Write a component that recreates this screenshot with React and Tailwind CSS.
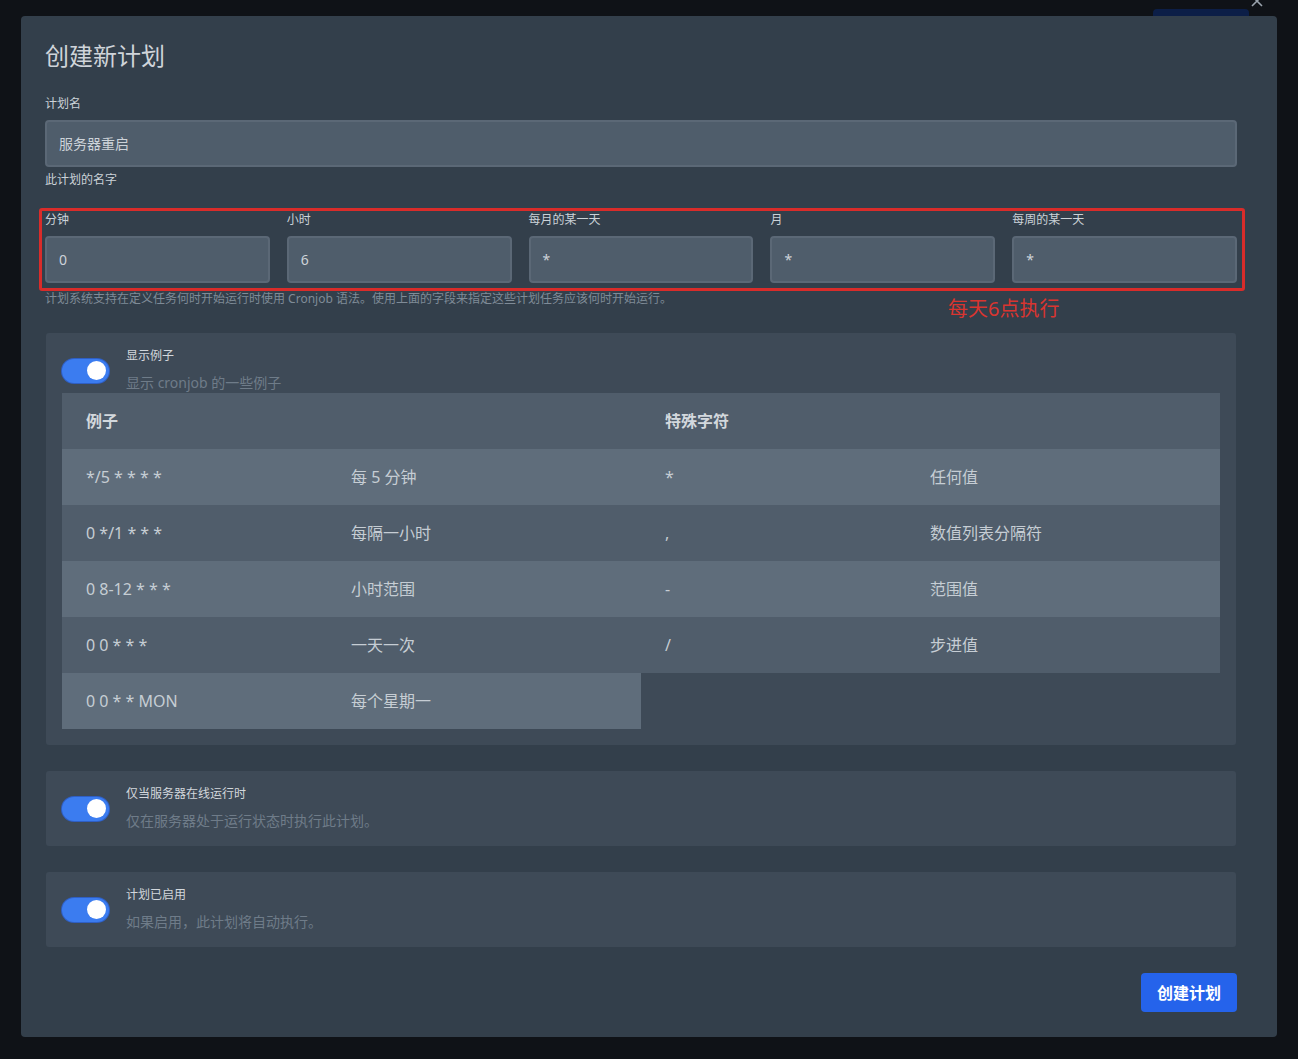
import React from "react";

const font = { fontFamily: '"Noto Sans", "Noto Sans CJK SC", sans-serif' };

const cronFields = [
  { label: "分钟", value: "0" },
  { label: "小时", value: "6" },
  { label: "每月的某一天", value: "*" },
  { label: "月", value: "*" },
  { label: "每周的某一天", value: "*" },
];

const examples = [
  ["*/5 * * * *", "每 5 分钟"],
  ["0 */1 * * *", "每隔一小时"],
  ["0 8-12 * * *", "小时范围"],
  ["0 0 * * *", "一天一次"],
  ["0 0 * * MON", "每个星期一"],
];

const specials = [
  ["*", "任何值"],
  [",", "数值列表分隔符"],
  ["-", "范围值"],
  ["/", "步进值"],
];

function Toggle() {
  return (
    <div className="w-[47px] h-[24px] shrink-0 rounded-full bg-[#3b7cf0] ring-1 ring-[#2f5fc4] flex items-center justify-end pr-[3px]">
      <div className="w-[19px] h-[19px] rounded-full bg-white" />
    </div>
  );
}

function ExampleTable({ title, rows }) {
  return (
    <div className="w-[579px] self-start">
      <div className="h-[56px] bg-[#505d6b] flex items-center px-6 text-[16px] font-bold text-[#d3d8dd]">
        {title}
      </div>
      {rows.map((r, i) => (
        <div
          key={i}
          className={`h-[56px] flex items-center text-[16px] text-[#c6cdd4] ${
            i % 2 === 0 ? "bg-[#5f6d7b]" : "bg-[#505d6b]"
          }`}
        >
          <div className="w-[265px] pl-6">{r[0]}</div>
          <div className="pl-6">{r[1]}</div>
        </div>
      ))}
    </div>
  );
}

function SwitchCard({ title, desc }) {
  return (
    <div className="mt-[26px] bg-[#3e4a57] rounded-[3px] px-4 py-[15px] flex items-center gap-[17px]">
      <Toggle />
      <div>
        <div className="text-[12px] leading-[16px] text-[#d2d7dc]">{title}</div>
        <div className="text-[14px] leading-[20px] mt-[9px] text-[#6f7c89]">{desc}</div>
      </div>
    </div>
  );
}

export default function App() {
  return (
    <div className="min-h-screen bg-[#0f1217] relative pt-[16px] pl-[21px] pb-[21px]" style={font}>
      {/* things behind the dialog */}
      <div className="absolute left-[1153px] top-[9px] w-[96px] h-[20px] rounded-[4px] bg-[#0c1e47]" />
      <svg className="absolute left-[1250px] top-[-6px]" width="14" height="14" viewBox="0 0 14 14">
        <path d="M2 2 L12 12 M12 2 L2 12" stroke="#9aa3ad" strokeWidth="1.6" />
      </svg>

      <div className="relative w-[1256px] bg-[#333f4b] rounded-[4px] pl-6 pr-[40px] pt-6 pb-[25px]">
        <h1 className="text-[24px] leading-[32px] text-[#cfd4da]">创建新计划</h1>

        <div className="mt-[24px] text-[12px] leading-[16px] text-[#cbd2d8]">计划名</div>
        <div className="mt-[8px] h-[47px] bg-[#4f5d6b] border-2 border-[#5b6876] rounded-[4px] flex items-center px-3 text-[14px] text-[#cdd3d9]">
          服务器重启
        </div>
        <div className="mt-[5px] text-[12px] leading-[16px] text-[#cbd2d8]">此计划的名字</div>

        <div className="relative mt-[24px]">
          <div className="grid grid-cols-5 gap-[17px]">
            {cronFields.map((f) => (
              <div key={f.label}>
                <div className="text-[12px] leading-[16px] text-[#cbd2d8]">{f.label}</div>
                <div className="mt-[8px] h-[47px] bg-[#4f5d6b] border-2 border-[#5b6876] rounded-[4px] flex items-center px-3 text-[14px] text-[#cdd3d9]">
                  {f.value}
                </div>
              </div>
            ))}
          </div>
          <div className="mt-[8px] text-[12px] leading-[16px] text-[#7f8b97]">
            计划系统支持在定义任务何时开始运行时使用 Cronjob 语法。使用上面的字段来指定这些计划任务应该何时开始运行。
          </div>
          <div className="absolute left-[-6px] top-[-4px] w-[1206px] h-[83px] border-[3px] border-[#d92c2a] rounded-[3px]" />
          <div className="absolute left-[903px] top-[83px] text-[20px] leading-[28px] text-[#d93530]">每天6点执行</div>
        </div>

        <div className="mt-[26px] ml-px w-[1190px] bg-[#3e4a57] rounded-[3px] px-4 pt-[15px] pb-4">
          <div className="flex items-center gap-[17px]">
            <Toggle />
            <div>
              <div className="text-[12px] leading-[16px] text-[#d2d7dc]">显示例子</div>
              <div className="text-[14px] leading-[20px] mt-[9px] text-[#6f7c89]">显示 cronjob 的一些例子</div>
            </div>
          </div>
          <div className="flex">
            <ExampleTable title="例子" rows={examples} />
            <ExampleTable title="特殊字符" rows={specials} />
          </div>
        </div>

        <div className="ml-px w-[1190px]">
          <SwitchCard title="仅当服务器在线运行时" desc="仅在服务器处于运行状态时执行此计划。" />
          <SwitchCard title="计划已启用" desc="如果启用，此计划将自动执行。" />
        </div>

        <div className="mt-[26px] flex justify-end">
          <button className="h-[39px] w-[96px] rounded-[4px] bg-[#2563eb] text-white text-[16px] font-bold">
            创建计划
          </button>
        </div>
      </div>
    </div>
  );
}
